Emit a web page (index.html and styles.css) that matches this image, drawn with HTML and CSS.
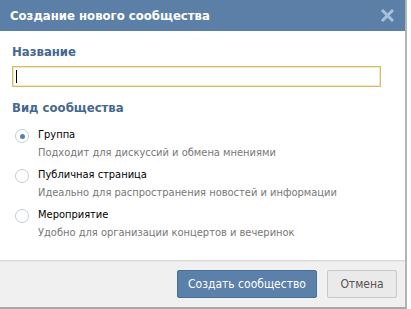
FILE: index.html
```html
<!DOCTYPE html>
<html lang="ru">
<head>
    <meta charset="UTF-8">
    <title>Создание нового сообщества</title>
    <link rel="stylesheet" href="styles.css">
</head>
<body>
    <div class="box">
        <div class="box-title">
            <span>Создание нового сообщества</span>
            <svg class="box-close" width="13" height="13" viewBox="0 0 13 13">
                <path d="M2 2 L11 11 M11 2 L2 11" stroke="#a9c0da" stroke-width="3" stroke-linecap="square"/>
            </svg>
        </div>
        <div class="box-body">
            <div class="label">Название</div>
            <div class="name-input"><span class="caret"></span></div>
            <div class="label kind">Вид сообщества</div>

            <div class="radio on">
                <span class="radio-dot"></span>
                <div>
                    <div class="radio-name">Группа</div>
                    <div class="radio-desc">Подходит для дискуссий и обмена мнениями</div>
                </div>
            </div>
            <div class="radio">
                <span class="radio-dot"></span>
                <div>
                    <div class="radio-name">Публичная страница</div>
                    <div class="radio-desc">Идеально для распространения новостей и информации</div>
                </div>
            </div>
            <div class="radio">
                <span class="radio-dot"></span>
                <div>
                    <div class="radio-name">Мероприятие</div>
                    <div class="radio-desc">Удобно для организации концертов и вечеринок</div>
                </div>
            </div>
        </div>
        <div class="box-bottom">
            <button class="button">Создать сообщество</button>
            <button class="button-gray">Отмена</button>
        </div>
    </div>
</body>
</html>
```

FILE: styles.css
```css
body {
    margin: 0;
    background: #fff;
    font-family: "DejaVu Sans Condensed", "DejaVu Sans", Tahoma, sans-serif;
    font-size: 11px;
    color: #000;
}
.box {
    width: 405px;
    border-right: 2px solid #b4b4b4;
    border-bottom: 3px solid #a8a8a8;
}
.box-title {
    height: 31px;
    background: #5b7fa6;
    color: #fff;
    font-weight: bold;
    font-size: 13px;
    display: flex;
    align-items: center;
    justify-content: space-between;
    padding: 0 11px 0 10px;
}
.box-body {
    padding: 13px 24px 12px 12px;
    background: #fff;
}
.label {
    color: #45688e;
    font-weight: bold;
    font-size: 13px;
    line-height: 16px;
}
.kind {
    margin-top: 13px;
    margin-bottom: 12px;
}
.name-input {
    height: 19px;
    margin-top: 6px;
    border: 1px solid #d9bb6f;
    box-shadow: inset 0 0 0 1px #f4e6bf;
    display: flex;
    align-items: center;
    padding-left: 3px;
}
.caret {
    width: 1px;
    height: 13px;
    background: #000;
}
.radio {
    display: flex;
    align-items: flex-start;
    margin-bottom: 8px;
}
.radio-dot {
    width: 12px;
    height: 12px;
    border: 1px solid #c5ccd4;
    border-radius: 50%;
    margin: 1px 9px 0 3px;
    background: #fff;
    display: flex;
    align-items: center;
    justify-content: center;
}
.radio.on .radio-dot::after {
    content: "";
    width: 5px;
    height: 5px;
    border-radius: 50%;
    background: #5b7fa6;
}
.radio-name {
    line-height: 14px;
}
.radio-desc {
    color: #777;
    line-height: 14px;
    margin-top: 4px;
}
.box-bottom {
    background: #f0f0f0;
    border-top: 1px solid #d9d9d9;
    box-shadow: inset 0 1px 0 #e8e8e8;
    height: 46px;
    display: flex;
    align-items: center;
    justify-content: flex-end;
    padding-right: 8px;
}
.button {
    font-family: inherit;
    font-size: 12px;
    color: #fff;
    background: #5b80aa;
    border: 1px solid #4a6f97;
    border-radius: 2px;
    height: 28px;
    width: 140px;
    margin-right: 10px;
}
.button-gray {
    font-family: inherit;
    font-size: 12px;
    color: #555;
    background: #eaeaea;
    border: 1px solid #c8c8c8;
    border-radius: 2px;
    height: 28px;
    width: 70px;
}
```
